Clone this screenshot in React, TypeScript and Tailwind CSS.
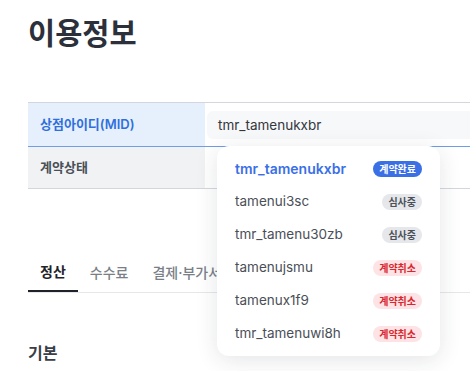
import React from 'react';

type Status = 'done' | 'review' | 'cancel';

const mids: { id: string; status: Status }[] = [
  { id: 'tmr_tamenukxbr', status: 'done' },
  { id: 'tamenui3sc', status: 'review' },
  { id: 'tmr_tamenu30zb', status: 'review' },
  { id: 'tamenujsmu', status: 'cancel' },
  { id: 'tamenux1f9', status: 'cancel' },
  { id: 'tmr_tamenuwi8h', status: 'cancel' },
];

function Badge({ status }: { status: Status }) {
  if (status === 'done') {
    return (
      <span className="h-[16px] px-[6px] rounded-full bg-[#3b6fe6] text-white text-[10px] font-semibold leading-[16px]">
        계약완료
      </span>
    );
  }
  if (status === 'review') {
    return (
      <span className="h-[16px] px-[6px] rounded-full bg-[#e5e7ea] text-[#4b5058] text-[10px] font-semibold leading-[16px]">
        심사중
      </span>
    );
  }
  return (
    <span className="h-[16px] px-[6px] rounded-full bg-[#fde3e5] text-[#d9262f] text-[10px] font-semibold leading-[16px]">
      계약취소
    </span>
  );
}

export default function App() {
  return (
    <div className="w-[470px] h-[371px] overflow-hidden bg-white font-['Inter','Noto_Sans_CJK_KR',sans-serif]">
      <div className="w-[700px] pl-[28px] pt-[13px]">
        <h1 className="text-[29.5px] font-bold leading-[40px] text-[#2b303a]">이용정보</h1>

        <div className="mt-[49px] border-t border-[#d3d7dd]">
          <div className="flex h-[44px] border-b border-[#6f9de6]">
            <div className="w-[177px] shrink-0 bg-[#e6f0fd] pl-[12px] flex items-center text-[13px] font-semibold text-[#2f6fdc]">
              상점아이디(MID)
            </div>
            <div className="relative flex-1 pl-[2px] pt-[8px]">
              <div className="h-[28px] rounded-md bg-[#f7f8f9] px-[11px] flex items-center text-[13.5px] text-[#33373d]">
                tmr_tamenukxbr
              </div>
              <div className="absolute left-[12px] top-[43px] z-10 w-[223px] rounded-[12px] bg-white py-[6px] shadow-[0_4px_22px_rgba(30,40,60,0.12)]">
                {mids.map((m, i) => (
                  <div key={m.id} className="h-[33px] px-[18px] flex items-center justify-between">
                    <span
                      className={
                        i === 0
                          ? 'text-[14px] font-semibold text-[#3b6fe6]'
                          : 'text-[13.5px] text-[#4a4f57]'
                      }
                    >
                      {m.id}
                    </span>
                    <Badge status={m.status} />
                  </div>
                ))}
              </div>
            </div>
          </div>
          <div className="flex h-[42px] border-b border-[#d3d7dd]">
            <div className="w-[177px] shrink-0 bg-[#f1f2f4] pl-[12px] flex items-center text-[13px] font-semibold text-[#4a4f57]">
              계약상태
            </div>
            <div className="flex-1" />
          </div>
        </div>

        <div className="mt-[63px] flex border-b border-[#e5e7eb]">
          <div className="h-[40px] px-[12px] flex items-center border-b-2 border-[#1f2329] text-[14px] font-bold text-[#1f2329]">
            정산
          </div>
          <div className="h-[40px] px-[12px] flex items-center text-[14px] font-medium text-[#7a7f87]">
            수수료
          </div>
          <div className="h-[40px] px-[12px] flex items-center text-[14px] font-medium text-[#7a7f87]">
            결제·부가서비스
          </div>
        </div>

        <h2 className="mt-[48px] text-[16px] font-bold leading-[24px] text-[#3a3f47]">기본</h2>
      </div>
    </div>
  );
}
